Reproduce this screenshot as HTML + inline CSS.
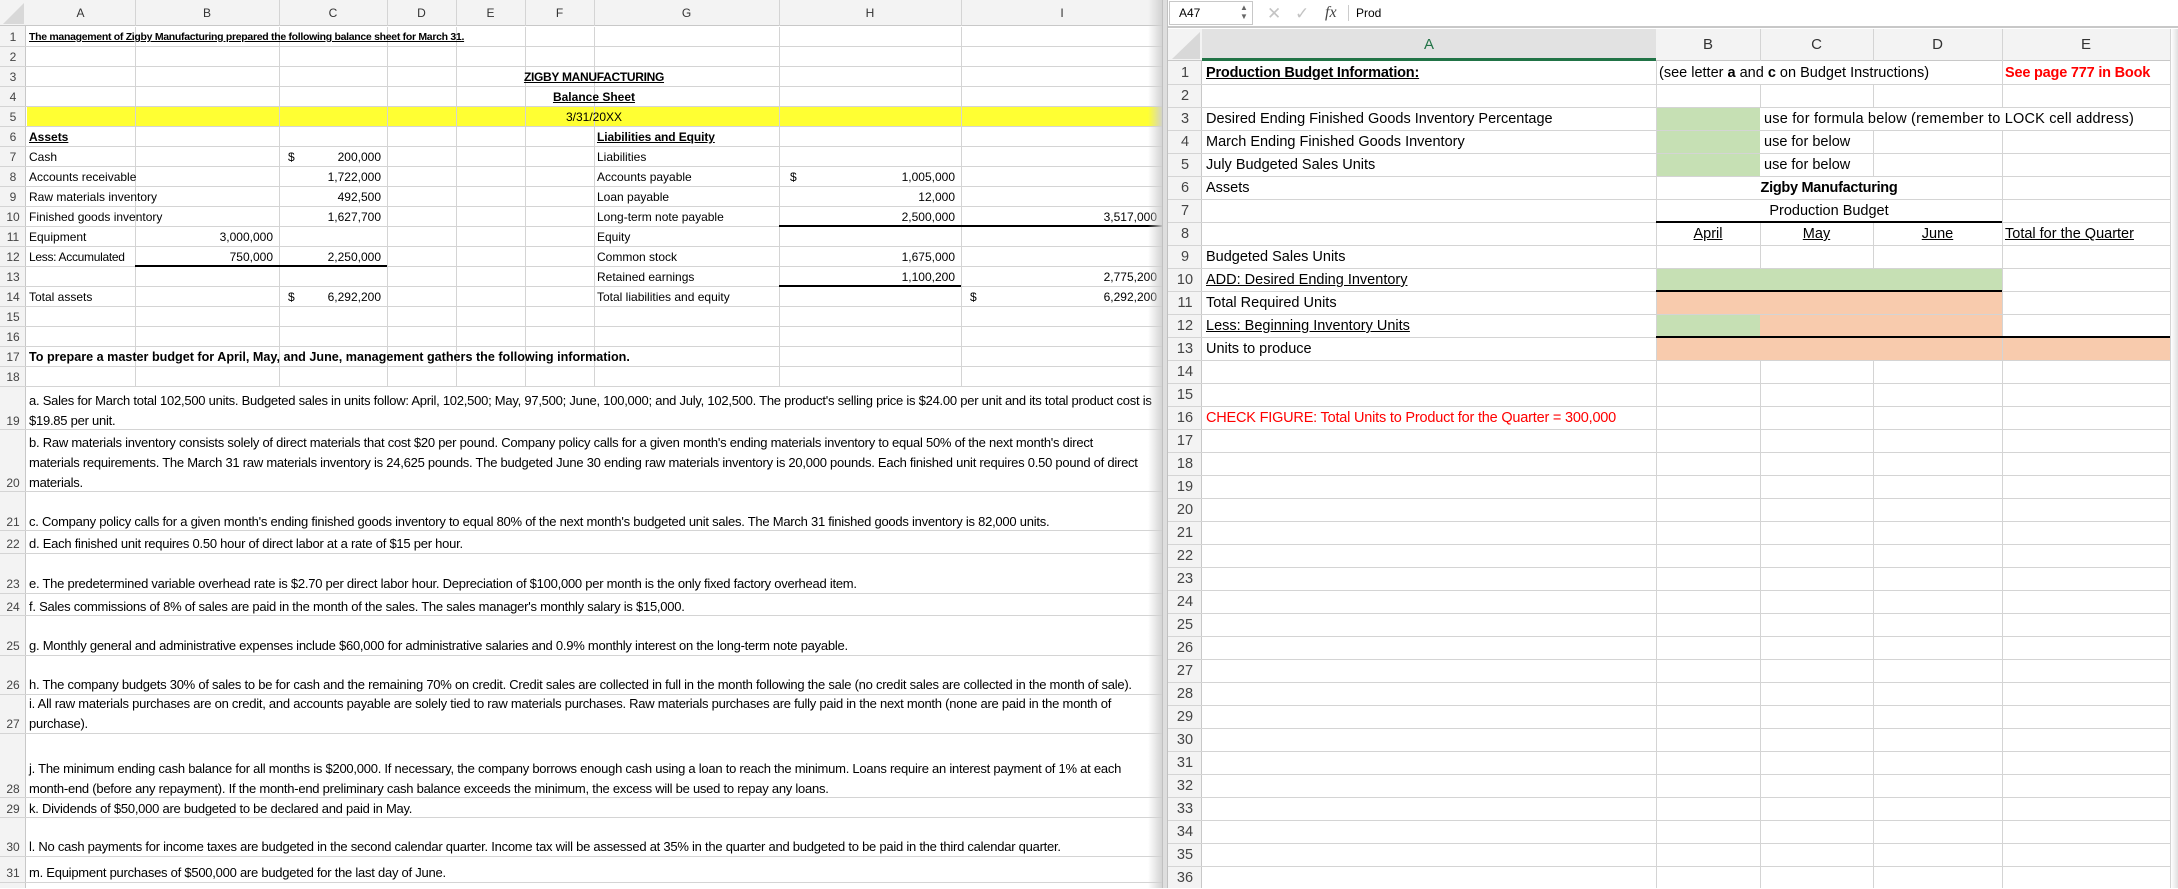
<!DOCTYPE html>
<html><head><meta charset="utf-8"><style>
*{margin:0;padding:0;box-sizing:border-box}
body{width:2178px;height:888px;overflow:hidden;background:#fff;position:relative;font-family:"Liberation Sans",sans-serif;color:#000}
.a{position:absolute;white-space:nowrap}
.hl{position:absolute;height:1px;background:#d4d4d4}
.vl{position:absolute;width:1px;background:#d4d4d4}
.bk{position:absolute;height:2px;background:#000}
.L{font-size:12px;line-height:16px;height:16px}
.R{font-size:14.5px;line-height:22px;height:22px}
.rn{color:#444;text-align:center}
u{text-decoration:underline}
</style></head><body>

<div class="a" style="left:0;top:0;width:1163px;height:26px;background:#f3f3f3;border-bottom:1px solid #c8c8c8"></div>
<div class="a" style="left:0;top:26px;width:26px;height:862px;background:#f3f3f3;border-right:1px solid #c8c8c8"></div>
<svg class="a" style="left:3px;top:3px" width="21" height="21"><polygon points="21,0 21,21 0,21" fill="#d8d8d8"/></svg>
<div class="a" style="left:0;top:0;width:1163px;height:26px;font-size:12px;line-height:26px;color:#333">
<span class="a" style="left:26px;width:109px;text-align:center">A</span>
<span class="a" style="left:135px;width:144px;text-align:center">B</span>
<span class="a" style="left:279px;width:108px;text-align:center">C</span>
<span class="a" style="left:387px;width:69px;text-align:center">D</span>
<span class="a" style="left:456px;width:69px;text-align:center">E</span>
<span class="a" style="left:525px;width:69px;text-align:center">F</span>
<span class="a" style="left:594px;width:185px;text-align:center">G</span>
<span class="a" style="left:779px;width:182px;text-align:center">H</span>
<span class="a" style="left:961px;width:202px;text-align:center">I</span>
</div>
<div class="vl" style="left:135px;top:0;height:26px"></div><div class="vl" style="left:279px;top:0;height:26px"></div><div class="vl" style="left:387px;top:0;height:26px"></div><div class="vl" style="left:456px;top:0;height:26px"></div><div class="vl" style="left:525px;top:0;height:26px"></div><div class="vl" style="left:594px;top:0;height:26px"></div><div class="vl" style="left:779px;top:0;height:26px"></div><div class="vl" style="left:961px;top:0;height:26px"></div>

<div class="a" style="left:27px;top:107px;width:1136px;height:20px;background:#ffff33"></div>

<div class="vl" style="left:135px;top:27px;height:360px"></div>
<div class="vl" style="left:279px;top:27px;height:360px"></div>
<div class="vl" style="left:387px;top:27px;height:360px"></div>
<div class="vl" style="left:456px;top:27px;height:360px"></div>
<div class="vl" style="left:525px;top:27px;height:360px"></div>
<div class="vl" style="left:594px;top:27px;height:360px"></div>
<div class="vl" style="left:779px;top:27px;height:360px"></div>
<div class="vl" style="left:961px;top:27px;height:360px"></div>

<div class="hl" style="left:0;top:46px;width:1163px"></div>
<div class="hl" style="left:0;top:66px;width:1163px"></div>
<div class="hl" style="left:0;top:86px;width:1163px"></div>
<div class="hl" style="left:0;top:106px;width:1163px"></div>
<div class="hl" style="left:0;top:126px;width:1163px"></div>
<div class="hl" style="left:0;top:146px;width:1163px"></div>
<div class="hl" style="left:0;top:166px;width:1163px"></div>
<div class="hl" style="left:0;top:186px;width:1163px"></div>
<div class="hl" style="left:0;top:206px;width:1163px"></div>
<div class="hl" style="left:0;top:226px;width:1163px"></div>
<div class="hl" style="left:0;top:246px;width:1163px"></div>
<div class="hl" style="left:0;top:266px;width:1163px"></div>
<div class="hl" style="left:0;top:286px;width:1163px"></div>
<div class="hl" style="left:0;top:306px;width:1163px"></div>
<div class="hl" style="left:0;top:326px;width:1163px"></div>
<div class="hl" style="left:0;top:346px;width:1163px"></div>
<div class="hl" style="left:0;top:366px;width:1163px"></div>
<div class="hl" style="left:0;top:386px;width:1163px"></div>
<div class="hl" style="left:0;top:429px;width:1163px"></div>
<div class="hl" style="left:0;top:491px;width:1163px"></div>
<div class="hl" style="left:0;top:530px;width:1163px"></div>
<div class="hl" style="left:0;top:553px;width:1163px"></div>
<div class="hl" style="left:0;top:593px;width:1163px"></div>
<div class="hl" style="left:0;top:615px;width:1163px"></div>
<div class="hl" style="left:0;top:655px;width:1163px"></div>
<div class="hl" style="left:0;top:694px;width:1163px"></div>
<div class="hl" style="left:0;top:733px;width:1163px"></div>
<div class="hl" style="left:0;top:797px;width:1163px"></div>
<div class="hl" style="left:0;top:817px;width:1163px"></div>
<div class="hl" style="left:0;top:856px;width:1163px"></div>
<div class="hl" style="left:0;top:882px;width:1163px"></div>

<div class="bk" style="left:135px;top:265px;width:252px"></div>
<div class="bk" style="left:779px;top:225px;width:384px"></div>
<div class="bk" style="left:779px;top:285px;width:182px"></div>

<div class="L rn a" style="left:0;width:26px;top:29px">1</div>
<div class="L rn a" style="left:0;width:26px;top:49px">2</div>
<div class="L rn a" style="left:0;width:26px;top:69px">3</div>
<div class="L rn a" style="left:0;width:26px;top:89px">4</div>
<div class="L rn a" style="left:0;width:26px;top:109px">5</div>
<div class="L rn a" style="left:0;width:26px;top:129px">6</div>
<div class="L rn a" style="left:0;width:26px;top:149px">7</div>
<div class="L rn a" style="left:0;width:26px;top:169px">8</div>
<div class="L rn a" style="left:0;width:26px;top:189px">9</div>
<div class="L rn a" style="left:0;width:26px;top:209px">10</div>
<div class="L rn a" style="left:0;width:26px;top:229px">11</div>
<div class="L rn a" style="left:0;width:26px;top:249px">12</div>
<div class="L rn a" style="left:0;width:26px;top:269px">13</div>
<div class="L rn a" style="left:0;width:26px;top:289px">14</div>
<div class="L rn a" style="left:0;width:26px;top:309px">15</div>
<div class="L rn a" style="left:0;width:26px;top:329px">16</div>
<div class="L rn a" style="left:0;width:26px;top:349px">17</div>
<div class="L rn a" style="left:0;width:26px;top:369px">18</div>
<div class="L rn a" style="left:0;width:26px;top:413px">19</div>
<div class="L rn a" style="left:0;width:26px;top:475px">20</div>
<div class="L rn a" style="left:0;width:26px;top:514px">21</div>
<div class="L rn a" style="left:0;width:26px;top:536px">22</div>
<div class="L rn a" style="left:0;width:26px;top:576px">23</div>
<div class="L rn a" style="left:0;width:26px;top:599px">24</div>
<div class="L rn a" style="left:0;width:26px;top:638px">25</div>
<div class="L rn a" style="left:0;width:26px;top:677px">26</div>
<div class="L rn a" style="left:0;width:26px;top:716px">27</div>
<div class="L rn a" style="left:0;width:26px;top:781px">28</div>
<div class="L rn a" style="left:0;width:26px;top:801px">29</div>
<div class="L rn a" style="left:0;width:26px;top:839px">30</div>
<div class="L rn a" style="left:0;width:26px;top:865px">31</div>

<div class="a L" style="left:29px;top:29px;font-weight:bold;font-size:10.5px;letter-spacing:-0.3px"><u>The management of Zigby Manufacturing prepared the following balance sheet for March 31.</u></div>
<div class="a L" style="left:394px;width:400px;top:69px;text-align:center;font-weight:bold;letter-spacing:-0.3px"><u>ZIGBY MANUFACTURING</u></div>
<div class="a L" style="left:394px;width:400px;top:89px;text-align:center;font-weight:bold"><u>Balance Sheet</u></div>
<div class="a L" style="left:394px;width:400px;top:109px;text-align:center">3/31/20XX</div>
<div class="a L" style="left:29px;top:129px;font-weight:bold"><u>Assets</u></div>
<div class="a L" style="left:597px;top:129px;font-weight:bold;letter-spacing:-0.1px"><u>Liabilities and Equity</u></div>
<div class="a L" style="left:29px;top:149px">Cash</div>
<div class="a L" style="left:29px;top:169px">Accounts receivable</div>
<div class="a L" style="left:29px;top:189px">Raw materials inventory</div>
<div class="a L" style="left:29px;top:209px">Finished goods inventory</div>
<div class="a L" style="left:29px;top:229px">Equipment</div>
<div class="a L" style="left:29px;top:249px;letter-spacing:-0.3px">Less: Accumulated</div>
<div class="a L" style="left:29px;top:289px">Total assets</div>
<div class="a L" style="left:140px;width:133px;text-align:right;top:229px">3,000,000</div>
<div class="a L" style="left:140px;width:133px;text-align:right;top:249px">750,000</div>
<div class="a L" style="left:288px;top:149px">$</div>
<div class="a L" style="left:288px;top:289px">$</div>
<div class="a L" style="left:290px;width:91px;text-align:right;top:149px">200,000</div>
<div class="a L" style="left:290px;width:91px;text-align:right;top:169px">1,722,000</div>
<div class="a L" style="left:290px;width:91px;text-align:right;top:189px">492,500</div>
<div class="a L" style="left:290px;width:91px;text-align:right;top:209px">1,627,700</div>
<div class="a L" style="left:290px;width:91px;text-align:right;top:249px">2,250,000</div>
<div class="a L" style="left:290px;width:91px;text-align:right;top:289px">6,292,200</div>
<div class="a L" style="left:597px;top:149px">Liabilities</div>
<div class="a L" style="left:597px;top:169px">Accounts payable</div>
<div class="a L" style="left:597px;top:189px">Loan payable</div>
<div class="a L" style="left:597px;top:209px">Long-term note payable</div>
<div class="a L" style="left:597px;top:229px">Equity</div>
<div class="a L" style="left:597px;top:249px">Common stock</div>
<div class="a L" style="left:597px;top:269px">Retained earnings</div>
<div class="a L" style="left:597px;top:289px">Total liabilities and equity</div>
<div class="a L" style="left:790px;top:169px">$</div>
<div class="a L" style="left:800px;width:155px;text-align:right;top:169px">1,005,000</div>
<div class="a L" style="left:800px;width:155px;text-align:right;top:189px">12,000</div>
<div class="a L" style="left:800px;width:155px;text-align:right;top:209px">2,500,000</div>
<div class="a L" style="left:800px;width:155px;text-align:right;top:249px">1,675,000</div>
<div class="a L" style="left:800px;width:155px;text-align:right;top:269px">1,100,200</div>
<div class="a L" style="left:970px;top:289px">$</div>
<div class="a L" style="left:1000px;width:157px;text-align:right;top:209px">3,517,000</div>
<div class="a L" style="left:1000px;width:157px;text-align:right;top:269px">2,775,200</div>
<div class="a L" style="left:1000px;width:157px;text-align:right;top:289px">6,292,200</div>

<div class="a L" style="left:29px;top:349px;font-weight:bold;font-size:12.6px">To prepare a master budget for April, May, and June, management gathers the following information.</div>
<div style="position:absolute;left:29px;top:0;letter-spacing:-0.25px">
<div class="a L" style="top:393px;font-size:13px">a. Sales for March total 102,500 units. Budgeted sales in units follow: April, 102,500; May, 97,500; June, 100,000; and July, 102,500. The product's selling price is $24.00 per unit and its total product cost is</div>
<div class="a L" style="top:413px;font-size:13px">$19.85 per unit.</div>
<div class="a L" style="top:435px;font-size:13px">b. Raw materials inventory consists solely of direct materials that cost $20 per pound. Company policy calls for a given month's ending materials inventory to equal 50% of the next month's direct</div>
<div class="a L" style="top:455px;font-size:13px">materials requirements. The March 31 raw materials inventory is 24,625 pounds. The budgeted June 30 ending raw materials inventory is 20,000 pounds. Each finished unit requires 0.50 pound of direct</div>
<div class="a L" style="top:475px;font-size:13px">materials.</div>
<div class="a L" style="top:514px;font-size:13px">c. Company policy calls for a given month's ending finished goods inventory to equal 80% of the next month's budgeted unit sales. The March 31 finished goods inventory is 82,000 units.</div>
<div class="a L" style="top:536px;font-size:13px">d. Each finished unit requires 0.50 hour of direct labor at a rate of $15 per hour.</div>
<div class="a L" style="top:576px;font-size:13px">e. The predetermined variable overhead rate is $2.70 per direct labor hour. Depreciation of $100,000 per month is the only fixed factory overhead item.</div>
<div class="a L" style="top:599px;font-size:13px">f. Sales commissions of 8% of sales are paid in the month of the sales. The sales manager's monthly salary is $15,000.</div>
<div class="a L" style="top:638px;font-size:13px">g. Monthly general and administrative expenses include $60,000 for administrative salaries and 0.9% monthly interest on the long-term note payable.</div>
<div class="a L" style="top:677px;font-size:13px">h. The company budgets 30% of sales to be for cash and the remaining 70% on credit. Credit sales are collected in full in the month following the sale (no credit sales are collected in the month of sale).</div>
<div class="a L" style="top:696px;font-size:13px">i. All raw materials purchases are on credit, and accounts payable are solely tied to raw materials purchases. Raw materials purchases are fully paid in the next month (none are paid in the month of</div>
<div class="a L" style="top:716px;font-size:13px">purchase).</div>
<div class="a L" style="top:761px;font-size:13px">j. The minimum ending cash balance for all months is $200,000. If necessary, the company borrows enough cash using a loan to reach the minimum. Loans require an interest payment of 1% at each</div>
<div class="a L" style="top:781px;font-size:13px">month-end (before any repayment). If the month-end preliminary cash balance exceeds the minimum, the excess will be used to repay any loans.</div>
<div class="a L" style="top:801px;font-size:13px">k. Dividends of $50,000 are budgeted to be declared and paid in May.</div>
<div class="a L" style="top:839px;font-size:13px">l. No cash payments for income taxes are budgeted in the second calendar quarter. Income tax will be assessed at 35% in the quarter and budgeted to be paid in the third calendar quarter.</div>
<div class="a L" style="top:865px;font-size:13px">m. Equipment purchases of $500,000 are budgeted for the last day of June.</div>
</div>

<div class="a" style="left:1148px;top:0;width:15px;height:888px;background:linear-gradient(to right,rgba(255,255,255,0),#d0d0d0)"></div>
<div class="a" style="left:1162px;top:0;width:6px;height:888px;background:#dedede;border-left:1px solid #c0c0c0;border-right:1px solid #c0c0c0"></div>

<div class="a" style="left:1168px;top:0;width:1010px;height:28px;background:#fff;border-bottom:2px solid #c8c8c8"></div>
<div class="a" style="left:1169px;top:1px;width:84px;height:24px;border:1px solid #c8c8c8;font-size:12px;line-height:22px;padding-left:9px">A47</div>
<div class="a" style="left:1240px;top:3px;font-size:8px;line-height:9px;color:#666">▲<br>▼</div>
<div class="a" style="left:1267px;top:3px;font-size:17px;line-height:22px;color:#c4c4c4">✕</div>
<div class="a" style="left:1295px;top:3px;font-size:17px;line-height:22px;color:#c4c4c4">✓</div>
<div class="a" style="left:1325px;top:2px;font-size:16px;line-height:22px;font-family:'Liberation Serif',serif;font-style:italic;color:#444">fx</div>
<div class="a" style="left:1348px;top:5px;width:1px;height:16px;background:#ccc"></div>
<div class="a" style="left:1356px;top:2px;font-size:12px;line-height:22px">Prod</div>

<div class="a" style="left:1168px;top:29px;width:1010px;height:32px;background:#f3f3f3;border-bottom:1px solid #c8c8c8"></div>
<div class="a" style="left:1168px;top:61px;width:34px;height:827px;background:#f3f3f3;border-right:1px solid #c8c8c8"></div>
<div class="a" style="left:1202px;top:29px;width:454px;height:32px;background:#e2e2e2;border-bottom:3px solid #217346"></div>
<svg class="a" style="left:1172px;top:32px" width="28" height="27"><polygon points="28,0 28,27 0,27" fill="#d8d8d8"/></svg>
<div class="a" style="left:1168px;top:29px;height:32px;width:1010px;font-size:15px;line-height:32px;color:#333">
<span class="a" style="left:34px;width:454px;text-align:center;color:#217346">A</span>
<span class="a" style="left:488px;width:104px;text-align:center">B</span>
<span class="a" style="left:592px;width:113px;text-align:center">C</span>
<span class="a" style="left:705px;width:129px;text-align:center">D</span>
<span class="a" style="left:834px;width:168px;text-align:center">E</span>
</div>
<div class="vl" style="left:1760px;top:29px;height:32px"></div><div class="vl" style="left:1873px;top:29px;height:32px"></div><div class="vl" style="left:2002px;top:29px;height:32px"></div><div class="vl" style="left:2170px;top:29px;height:32px"></div>

<div class="a" style="left:1656px;top:107px;width:104px;height:69px;background:#c6e0b4"></div>
<div class="a" style="left:1656px;top:268px;width:346px;height:23px;background:#c6e0b4"></div>
<div class="a" style="left:1656px;top:291px;width:346px;height:23px;background:#f8cbad"></div>
<div class="a" style="left:1656px;top:314px;width:104px;height:23px;background:#c6e0b4"></div>
<div class="a" style="left:1760px;top:314px;width:242px;height:23px;background:#f8cbad"></div>
<div class="a" style="left:1656px;top:337px;width:514px;height:23px;background:#f8cbad"></div>

<div class="vl" style="left:1656px;top:61px;height:827px"></div>
<div class="vl" style="left:1760px;top:84px;height:23px"></div>
<div class="vl" style="left:1760px;top:222px;height:46px"></div>
<div class="vl" style="left:1760px;top:360px;height:528px"></div>
<div class="vl" style="left:1873px;top:84px;height:23px"></div>
<div class="vl" style="left:1873px;top:130px;height:46px"></div>
<div class="vl" style="left:1873px;top:222px;height:46px"></div>
<div class="vl" style="left:1873px;top:360px;height:528px"></div>
<div class="vl" style="left:2002px;top:61px;height:46px"></div>
<div class="vl" style="left:2002px;top:130px;height:758px"></div>
<div class="vl" style="left:2170px;top:61px;height:827px"></div>
<div style="position:absolute;left:1168px;top:0">
<div class="hl" style="left:0;top:84px;width:1010px"></div>
<div class="hl" style="left:0;top:107px;width:1010px"></div>
<div class="hl" style="left:0;top:130px;width:1010px"></div>
<div class="hl" style="left:0;top:153px;width:1010px"></div>
<div class="hl" style="left:0;top:176px;width:1010px"></div>
<div class="hl" style="left:0;top:199px;width:1010px"></div>
<div class="hl" style="left:0;top:222px;width:1010px"></div>
<div class="hl" style="left:0;top:245px;width:1010px"></div>
<div class="hl" style="left:0;top:268px;width:1010px"></div>
<div class="hl" style="left:0;top:291px;width:1010px"></div>
<div class="hl" style="left:0;top:314px;width:1010px"></div>
<div class="hl" style="left:0;top:337px;width:1010px"></div>
<div class="hl" style="left:0;top:360px;width:1010px"></div>
<div class="hl" style="left:0;top:383px;width:1010px"></div>
<div class="hl" style="left:0;top:406px;width:1010px"></div>
<div class="hl" style="left:0;top:429px;width:1010px"></div>
<div class="hl" style="left:0;top:452px;width:1010px"></div>
<div class="hl" style="left:0;top:475px;width:1010px"></div>
<div class="hl" style="left:0;top:498px;width:1010px"></div>
<div class="hl" style="left:0;top:521px;width:1010px"></div>
<div class="hl" style="left:0;top:544px;width:1010px"></div>
<div class="hl" style="left:0;top:567px;width:1010px"></div>
<div class="hl" style="left:0;top:590px;width:1010px"></div>
<div class="hl" style="left:0;top:613px;width:1010px"></div>
<div class="hl" style="left:0;top:636px;width:1010px"></div>
<div class="hl" style="left:0;top:659px;width:1010px"></div>
<div class="hl" style="left:0;top:682px;width:1010px"></div>
<div class="hl" style="left:0;top:705px;width:1010px"></div>
<div class="hl" style="left:0;top:728px;width:1010px"></div>
<div class="hl" style="left:0;top:751px;width:1010px"></div>
<div class="hl" style="left:0;top:774px;width:1010px"></div>
<div class="hl" style="left:0;top:797px;width:1010px"></div>
<div class="hl" style="left:0;top:820px;width:1010px"></div>
<div class="hl" style="left:0;top:843px;width:1010px"></div>
<div class="hl" style="left:0;top:866px;width:1010px"></div>
</div>
<div class="bk" style="left:1656px;top:221px;width:346px"></div>
<div class="bk" style="left:1656px;top:290px;width:346px"></div>
<div class="bk" style="left:1656px;top:336px;width:514px"></div>

<div style="position:absolute;left:1168px;top:0;font-size:15px;color:#444">
<div class="a R rn" style="width:34px;top:62px">1</div><div class="a R rn" style="width:34px;top:85px">2</div><div class="a R rn" style="width:34px;top:108px">3</div><div class="a R rn" style="width:34px;top:131px">4</div><div class="a R rn" style="width:34px;top:154px">5</div><div class="a R rn" style="width:34px;top:177px">6</div><div class="a R rn" style="width:34px;top:200px">7</div><div class="a R rn" style="width:34px;top:223px">8</div><div class="a R rn" style="width:34px;top:246px">9</div><div class="a R rn" style="width:34px;top:269px">10</div><div class="a R rn" style="width:34px;top:292px">11</div><div class="a R rn" style="width:34px;top:315px">12</div><div class="a R rn" style="width:34px;top:338px">13</div><div class="a R rn" style="width:34px;top:361px">14</div><div class="a R rn" style="width:34px;top:384px">15</div><div class="a R rn" style="width:34px;top:407px">16</div><div class="a R rn" style="width:34px;top:430px">17</div><div class="a R rn" style="width:34px;top:453px">18</div><div class="a R rn" style="width:34px;top:476px">19</div><div class="a R rn" style="width:34px;top:499px">20</div><div class="a R rn" style="width:34px;top:522px">21</div><div class="a R rn" style="width:34px;top:545px">22</div><div class="a R rn" style="width:34px;top:568px">23</div><div class="a R rn" style="width:34px;top:591px">24</div><div class="a R rn" style="width:34px;top:614px">25</div><div class="a R rn" style="width:34px;top:637px">26</div><div class="a R rn" style="width:34px;top:660px">27</div><div class="a R rn" style="width:34px;top:683px">28</div><div class="a R rn" style="width:34px;top:706px">29</div><div class="a R rn" style="width:34px;top:729px">30</div><div class="a R rn" style="width:34px;top:752px">31</div><div class="a R rn" style="width:34px;top:775px">32</div><div class="a R rn" style="width:34px;top:798px">33</div><div class="a R rn" style="width:34px;top:821px">34</div><div class="a R rn" style="width:34px;top:844px">35</div><div class="a R rn" style="width:34px;top:867px">36</div>
</div>

<div class="a R" style="left:1206px;top:62px;font-weight:bold;letter-spacing:-0.2px"><u>Production Budget Information:</u></div>
<div class="a R" style="left:1659px;top:62px">(see letter <b>a</b> and <b>c</b> on Budget Instructions)</div>
<div class="a R" style="left:2005px;top:62px;font-weight:bold;color:#ff0000;letter-spacing:-0.2px">See page 777 in Book</div>
<div class="a R" style="left:1206px;top:108px">Desired Ending Finished Goods Inventory Percentage</div>
<div class="a R" style="left:1206px;top:131px">March Ending Finished Goods Inventory</div>
<div class="a R" style="left:1206px;top:154px">July Budgeted Sales Units</div>
<div class="a R" style="left:1206px;top:177px">Assets</div>
<div class="a R" style="left:1764px;top:108px;letter-spacing:0.2px">use for formula below (remember to LOCK cell address)</div>
<div class="a R" style="left:1764px;top:131px">use for below</div>
<div class="a R" style="left:1764px;top:154px">use for below</div>
<div class="a R" style="left:1656px;width:346px;text-align:center;top:177px;font-weight:bold;letter-spacing:-0.3px">Zigby Manufacturing</div>
<div class="a R" style="left:1656px;width:346px;text-align:center;top:200px">Production Budget</div>
<div class="a R" style="left:1656px;width:104px;text-align:center;top:223px"><u>April</u></div>
<div class="a R" style="left:1760px;width:113px;text-align:center;top:223px"><u>May</u></div>
<div class="a R" style="left:1873px;width:129px;text-align:center;top:223px"><u>June</u></div>
<div class="a R" style="left:2005px;top:223px"><u>Total for the Quarter</u></div>
<div class="a R" style="left:1206px;top:246px">Budgeted Sales Units</div>
<div class="a R" style="left:1206px;top:269px"><u>ADD: Desired Ending Inventory</u></div>
<div class="a R" style="left:1206px;top:292px">Total Required Units</div>
<div class="a R" style="left:1206px;top:315px"><u>Less: Beginning Inventory Units</u></div>
<div class="a R" style="left:1206px;top:338px">Units to produce</div>
<div class="a R" style="left:1206px;top:407px;color:#ff0000;letter-spacing:-0.2px">CHECK FIGURE: Total Units to Product for the Quarter = 300,000</div>
<div class="a" style="left:2171px;top:29px;width:7px;height:859px;background:linear-gradient(to right,#fff,#e0e0e0)"></div>
</body></html>
